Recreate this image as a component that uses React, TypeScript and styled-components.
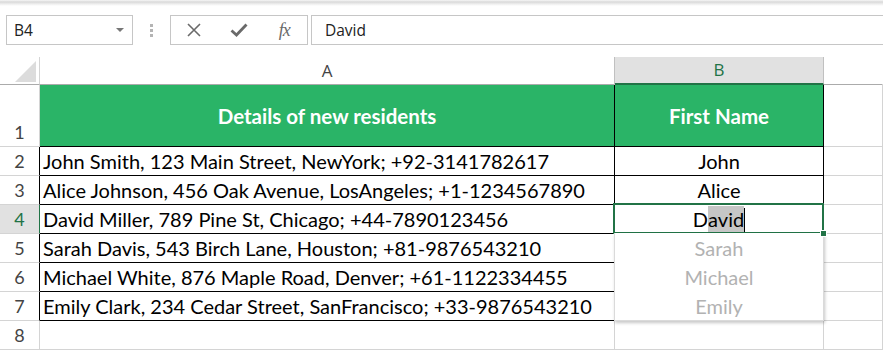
import React from 'react';
import styled, { createGlobalStyle } from 'styled-components';

const GREEN = '#217346';
const GRID = '#d4d4d4';
const INK = '#000';

const GlobalStyle = createGlobalStyle`
  html, body {
    margin: 0;
    padding: 0;
    background: #fff;
  }
  body {
    width: 883px;
    height: 351px;
    overflow: hidden;
    font-family: Lato, "Liberation Sans", sans-serif;
  }
`;

const Page = styled.div`
  display: flex;
  flex-direction: column;
`;

const TopShade = styled.div`
  height: 6px;
  background: linear-gradient(#f7f7f7 0, #d9d9d9 2px, #eeeeee 4px, #fff 6px);
`;

const FormulaBar = styled.div`
  display: flex;
  align-items: stretch;
  height: 30px;
  margin-top: 9px;
  padding-left: 6px;
`;

const NameBox = styled.div`
  box-sizing: border-box;
  width: 127px;
  border: 1px solid #c6c6c6;
  display: flex;
  align-items: center;
  justify-content: space-between;
  padding: 0 8px 0 7px;
  font-family: "Open Sans", "Liberation Sans", sans-serif;
  font-size: 15.5px;
  color: #222;
`;

const Caret = styled.span`
  width: 0;
  height: 0;
  border-left: 4px solid transparent;
  border-right: 4px solid transparent;
  border-top: 4px solid #777;
`;

const Grip = styled.div`
  width: 37px;
  display: flex;
  flex-direction: column;
  align-items: center;
  justify-content: center;
  gap: 2px;
  span {
    width: 3px;
    height: 3px;
    background: #b4b4b4;
  }
`;

const FxGroup = styled.div`
  box-sizing: border-box;
  width: 138px;
  border: 1px solid #c6c6c6;
  display: grid;
  grid-template-columns: repeat(3, 1fr);
  align-items: center;
  justify-items: center;
  color: #6a6a6a;
`;

const FxText = styled.span`
  font-family: "Liberation Serif", serif;
  font-style: italic;
  font-size: 18px;
  color: #6a6a6a;
  letter-spacing: -1px;
`;

const FormulaInput = styled.div`
  box-sizing: border-box;
  flex: 1;
  margin-left: 3px;
  margin-right: -2px;
  border: 1px solid #c6c6c6;
  display: flex;
  align-items: center;
  padding-left: 13px;
  font-family: "Open Sans", "Liberation Sans", sans-serif;
  font-size: 15.5px;
  color: #222;
`;

const Sheet = styled.div`
  margin-top: 12px;
  display: grid;
  grid-template-columns: 40px 575px 209px 1fr;
  grid-template-rows: 28px 62px repeat(7, 29px);
`;

const Cell = styled.div<{ $right?: string; $bottom?: string; $bg?: string; $align?: string }>`
  box-sizing: border-box;
  position: relative;
  display: flex;
  align-items: flex-end;
  justify-content: ${(p) => p.$align || 'flex-start'};
  padding: 0 3px 1px 3px;
  border-right: 1px solid ${(p) => p.$right || GRID};
  border-bottom: 1px solid ${(p) => p.$bottom || GRID};
  background: ${(p) => p.$bg || '#fff'};
  font-size: 20px;
  line-height: 26px;
  color: #000;
  white-space: nowrap;
`;

const Corner = styled(Cell)`
  &::after {
    content: '';
    position: absolute;
    right: 3px;
    bottom: 2px;
    width: 0;
    height: 0;
    border-left: 21px solid transparent;
    border-bottom: 21px solid #dcdcdc;
  }
`;

const ColHead = styled(Cell)<{ $active?: boolean }>`
  align-items: center;
  justify-content: center;
  padding: 0;
  font-family: "Open Sans", "Liberation Sans", sans-serif;
  font-size: 17px;
  color: ${(p) => (p.$active ? GREEN : '#444')};
  background: ${(p) => (p.$active ? '#e1e1e1' : '#fff')};
  border-bottom: ${(p) => (p.$active ? `2px solid ${GREEN}` : '1px solid #ababab')};
  border-right-color: ${(p) => (p.$active ? '#c0c0c0' : 'transparent')};
  box-shadow: ${(p) => (p.$active ? '-1px 0 0 #c0c0c0' : 'none')};
`;

const RowHead = styled(Cell)<{ $active?: boolean }>`
  justify-content: center;
  padding: 0 0 1px 0;
  font-family: Lato, "Liberation Sans", sans-serif;
  font-size: 18px;
  color: ${(p) => (p.$active ? GREEN : '#444')};
  background: ${(p) => (p.$active ? '#e1e1e1' : '#fff')};
`;

const HeaderCell = styled(Cell)`
  align-items: center;
  justify-content: center;
  background: #2ab467;
  color: #fff;
  font-weight: 700;
  font-size: 20.5px;
  padding-top: 2px;
`;

const Selected = styled(Cell)`
  &::after {
    content: '';
    position: absolute;
    left: -2px;
    top: -2px;
    right: -1px;
    bottom: -1px;
    border: 2px solid ${GREEN};
    pointer-events: none;
  }
`;

const FillHandle = styled.span`
  position: absolute;
  right: -4px;
  bottom: -4px;
  width: 5px;
  height: 5px;
  background: ${GREEN};
  border: 1px solid #fff;
  z-index: 3;
`;

const Typed = styled.span`
  display: inline-flex;
  align-items: flex-end;
`;

const Suggested = styled.span`
  background: #c6c6c6;
`;

const TextCaret = styled.span`
  display: inline-block;
  width: 1px;
  height: 24px;
  background: #000;
  margin-bottom: 0;
`;

const Suggestions = styled.div`
  position: absolute;
  top: 100%;
  left: -1px;
  right: -1px;
  background: #fff;
  border: 1px solid #dadada;
  border-top: none;
  box-shadow: 1px 2px 3px rgba(0, 0, 0, 0.22);
  z-index: 2;
`;

const Suggestion = styled.div`
  height: 29px;
  display: flex;
  align-items: flex-end;
  justify-content: center;
  padding-bottom: 1px;
  box-sizing: border-box;
  font-size: 20px;
  line-height: 26px;
  color: #b2b2b2;
`;

const rows = [
  ['John Smith, 123 Main Street, NewYork; +92-3141782617', 'John'],
  ['Alice Johnson, 456 Oak Avenue, LosAngeles; +1-1234567890', 'Alice'],
  ['David Miller, 789 Pine St, Chicago; +44-7890123456', 'David'],
  ['Sarah Davis, 543 Birch Lane, Houston; +81-9876543210', ''],
  ['Michael White, 876 Maple Road, Denver; +61-1122334455', ''],
  ['Emily Clark, 234 Cedar Street, SanFrancisco; +33-9876543210', ''],
];

const X = () => (
  <svg width="16" height="16" viewBox="0 0 16 16">
    <path d="M2 2 L14 14 M14 2 L2 14" stroke="#6a6a6a" strokeWidth="1.6" fill="none" />
  </svg>
);

const Check = () => (
  <svg width="18" height="16" viewBox="0 0 18 16">
    <path d="M1.5 8.5 L6.5 13 L16.5 2.5" stroke="#6a6a6a" strokeWidth="2.8" fill="none" />
  </svg>
);

export default function App() {
  return (
    <Page>
      <GlobalStyle />
      <TopShade />
      <FormulaBar>
        <NameBox>
          B4
          <Caret />
        </NameBox>
        <Grip>
          <span />
          <span />
          <span />
        </Grip>
        <FxGroup>
          <X />
          <Check />
          <FxText>fx</FxText>
        </FxGroup>
        <FormulaInput>David</FormulaInput>
      </FormulaBar>

      <Sheet>
        <Corner $bottom="#ababab" />
        <ColHead>A</ColHead>
        <ColHead $active>B</ColHead>
        <ColHead />

        <RowHead>1</RowHead>
        <HeaderCell $right={INK} $bottom={INK}>Details of new residents</HeaderCell>
        <HeaderCell $right={INK} $bottom={INK}>First Name</HeaderCell>
        <Cell />

        {rows.map(([detail, first], i) => {
          const n = i + 2;
          const active = n === 4;
          return (
            <React.Fragment key={n}>
              <RowHead $active={active} $right={active ? GREEN : INK}>{n}</RowHead>
              <Cell $right={INK} $bottom={INK}>{detail}</Cell>
              {active ? (
                <Selected $right={INK} $bottom={INK} $align="center">
                  <Typed>
                    D<Suggested>avid</Suggested>
                    <TextCaret />
                  </Typed>
                  <FillHandle />
                  <Suggestions>
                    <Suggestion>Sarah</Suggestion>
                    <Suggestion>Michael</Suggestion>
                    <Suggestion>Emily</Suggestion>
                  </Suggestions>
                </Selected>
              ) : (
                <Cell $right={INK} $bottom={INK} $align="center">{first}</Cell>
              )}
              <Cell />
            </React.Fragment>
          );
        })}

        <RowHead>8</RowHead>
        <Cell />
        <Cell />
        <Cell />
      </Sheet>
    </Page>
  );
}
